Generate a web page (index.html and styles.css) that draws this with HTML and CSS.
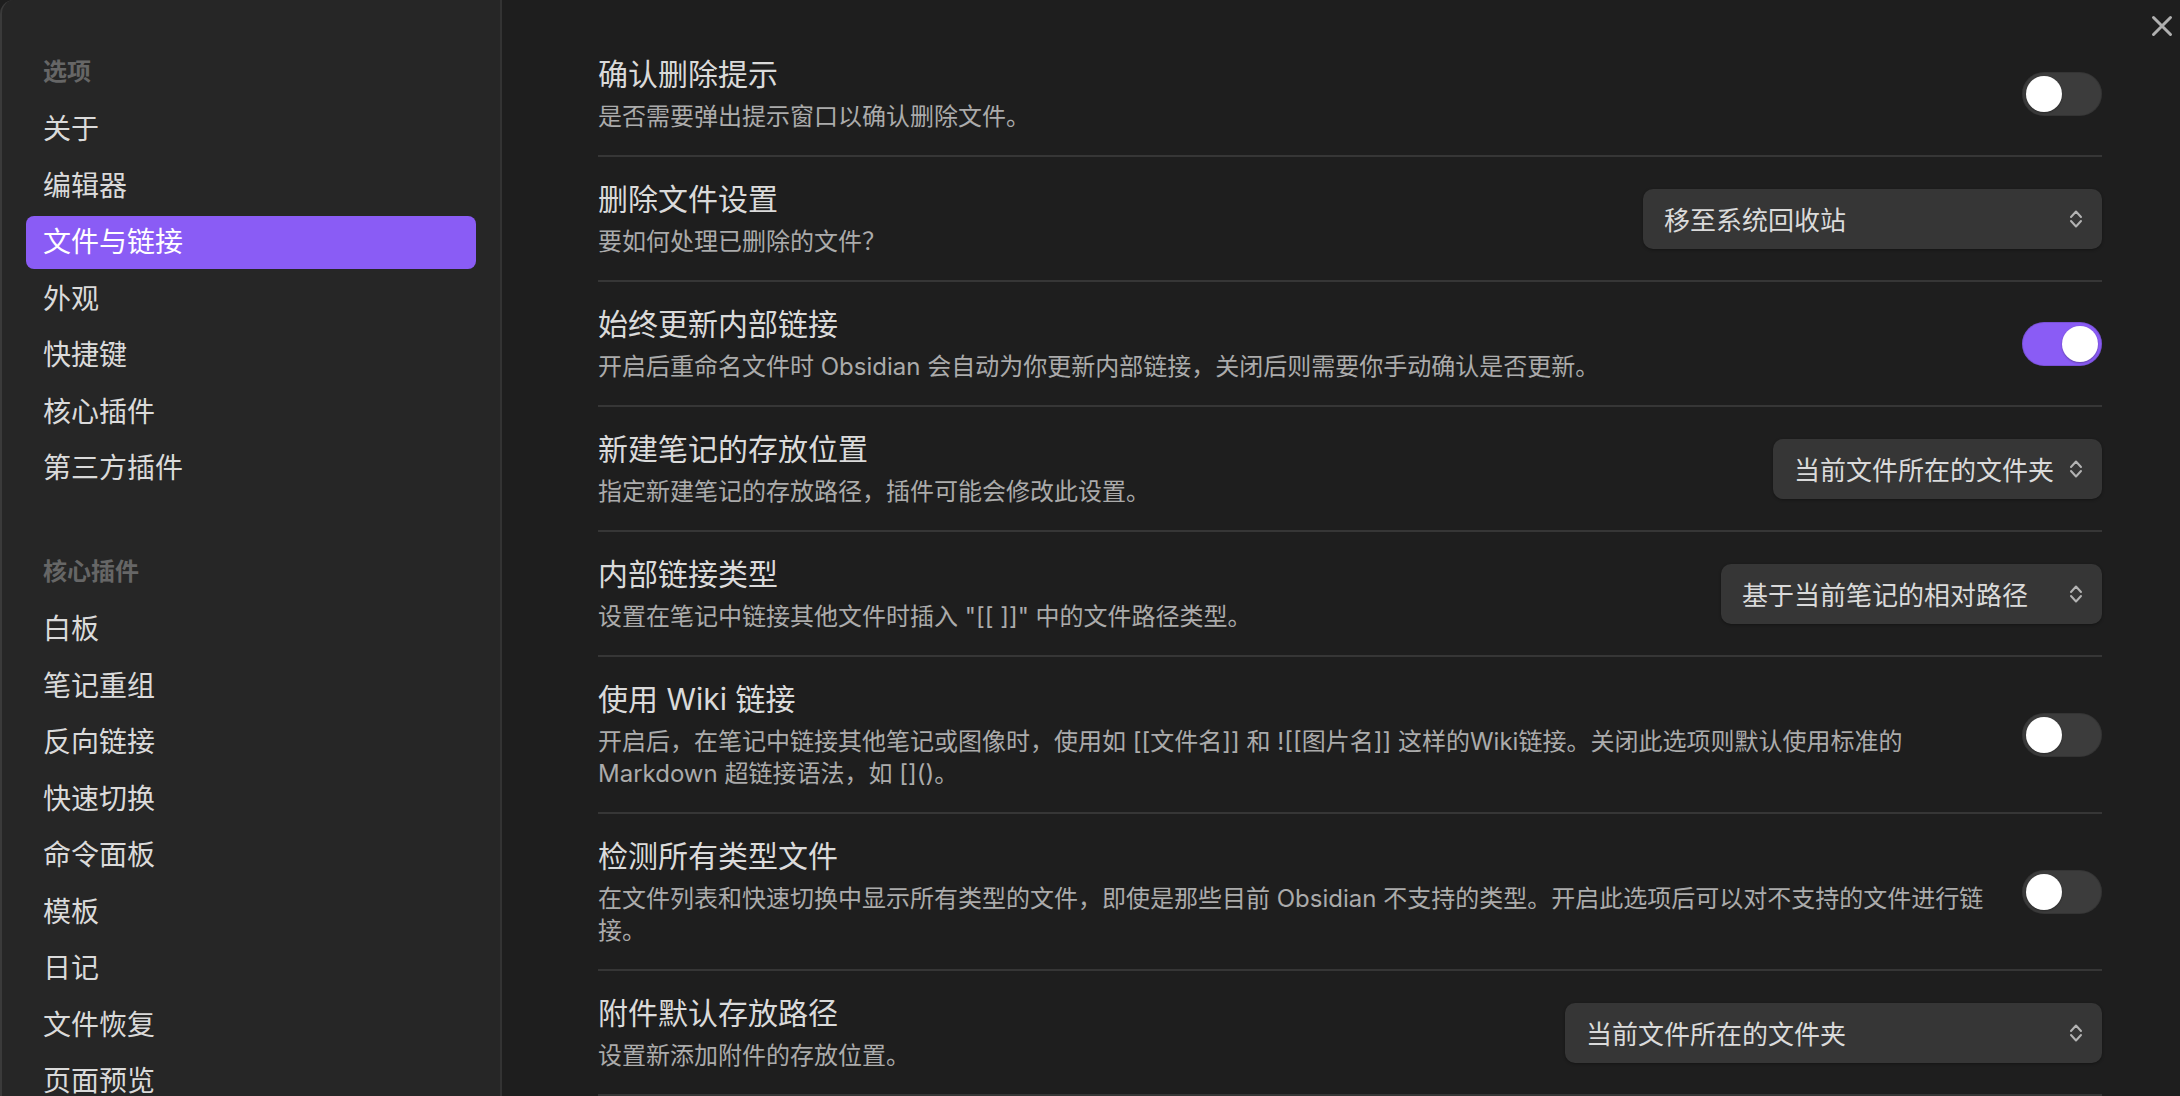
FILE: index.html
```html
<!DOCTYPE html>
<html lang="zh-CN">
<head>
    <meta charset="UTF-8">
    <title>设置 - 文件与链接</title>
    <link rel="stylesheet" href="styles.css">
</head>
<body>
    <div class="modal">
        <nav class="sidebar">
            <div class="nav-group">
                <div class="nav-title">选项</div>
                <div class="nav-item">关于</div>
                <div class="nav-item">编辑器</div>
                <div class="nav-item active">文件与链接</div>
                <div class="nav-item">外观</div>
                <div class="nav-item">快捷键</div>
                <div class="nav-item">核心插件</div>
                <div class="nav-item">第三方插件</div>
            </div>
            <div class="nav-group">
                <div class="nav-title">核心插件</div>
                <div class="nav-item">白板</div>
                <div class="nav-item">笔记重组</div>
                <div class="nav-item">反向链接</div>
                <div class="nav-item">快速切换</div>
                <div class="nav-item">命令面板</div>
                <div class="nav-item">模板</div>
                <div class="nav-item">日记</div>
                <div class="nav-item">文件恢复</div>
                <div class="nav-item">页面预览</div>
            </div>
        </nav>

        <main class="content">
            <div class="setting-item">
                <div class="setting-info">
                    <div class="setting-name">确认删除提示</div>
                    <div class="setting-desc">是否需要弹出提示窗口以确认删除文件。</div>
                </div>
                <div class="setting-control">
                    <div class="toggle"><span class="knob"></span></div>
                </div>
            </div>

            <div class="setting-item">
                <div class="setting-info">
                    <div class="setting-name">删除文件设置</div>
                    <div class="setting-desc">要如何处理已删除的文件？</div>
                </div>
                <div class="setting-control">
                    <div class="dropdown dropdown-trash">
                        <span>移至系统回收站</span>
                        <svg class="chevron" width="14" height="20" viewBox="0 0 14 20"><path d="M2 8 L7 2.5 L12 8 M2 12 L7 17.5 L12 12"/></svg>
                    </div>
                </div>
            </div>

            <div class="setting-item">
                <div class="setting-info">
                    <div class="setting-name">始终更新内部链接</div>
                    <div class="setting-desc">开启后重命名文件时 Obsidian 会自动为你更新内部链接，关闭后则需要你手动确认是否更新。</div>
                </div>
                <div class="setting-control">
                    <div class="toggle on"><span class="knob"></span></div>
                </div>
            </div>

            <div class="setting-item">
                <div class="setting-info">
                    <div class="setting-name">新建笔记的存放位置</div>
                    <div class="setting-desc">指定新建笔记的存放路径，插件可能会修改此设置。</div>
                </div>
                <div class="setting-control">
                    <div class="dropdown dropdown-folder">
                        <span>当前文件所在的文件夹</span>
                        <svg class="chevron" width="14" height="20" viewBox="0 0 14 20"><path d="M2 8 L7 2.5 L12 8 M2 12 L7 17.5 L12 12"/></svg>
                    </div>
                </div>
            </div>

            <div class="setting-item">
                <div class="setting-info">
                    <div class="setting-name">内部链接类型</div>
                    <div class="setting-desc">设置在笔记中链接其他文件时插入 "[[ ]]" 中的文件路径类型。</div>
                </div>
                <div class="setting-control">
                    <div class="dropdown dropdown-link">
                        <span>基于当前笔记的相对路径</span>
                        <svg class="chevron" width="14" height="20" viewBox="0 0 14 20"><path d="M2 8 L7 2.5 L12 8 M2 12 L7 17.5 L12 12"/></svg>
                    </div>
                </div>
            </div>

            <div class="setting-item">
                <div class="setting-info">
                    <div class="setting-name">使用 Wiki 链接</div>
                    <div class="setting-desc">开启后，在笔记中链接其他笔记或图像时，使用如 [[文件名]] 和 ![[图片名]] 这样的Wiki链接。关闭此选项则默认使用标准的 Markdown 超链接语法，如 []()。</div>
                </div>
                <div class="setting-control">
                    <div class="toggle"><span class="knob"></span></div>
                </div>
            </div>

            <div class="setting-item">
                <div class="setting-info">
                    <div class="setting-name">检测所有类型文件</div>
                    <div class="setting-desc">在文件列表和快速切换中显示所有类型的文件，即使是那些目前 Obsidian 不支持的类型。开启此选项后可以对不支持的文件进行链接。</div>
                </div>
                <div class="setting-control">
                    <div class="toggle"><span class="knob"></span></div>
                </div>
            </div>

            <div class="setting-item">
                <div class="setting-info">
                    <div class="setting-name">附件默认存放路径</div>
                    <div class="setting-desc">设置新添加附件的存放位置。</div>
                </div>
                <div class="setting-control">
                    <div class="dropdown dropdown-attach">
                        <span>当前文件所在的文件夹</span>
                        <svg class="chevron" width="14" height="20" viewBox="0 0 14 20"><path d="M2 8 L7 2.5 L12 8 M2 12 L7 17.5 L12 12"/></svg>
                    </div>
                </div>
            </div>

            <div class="setting-item setting-end"></div>
        </main>

        <button class="close" aria-label="关闭">
            <svg width="22" height="22" viewBox="0 0 22 22"><path d="M2.5 2.5 L19.5 19.5 M19.5 2.5 L2.5 19.5"/></svg>
        </button>
    </div>
</body>
</html>
```

FILE: styles.css
```css
/* General Styles */
body {
    margin: 0;
    padding: 0;
    background: #1e1e1e;
    color: #dadada;
    font-family: Inter, "Noto Sans CJK SC", sans-serif;
    overflow: hidden;
}

.modal {
    position: relative;
    display: flex;
    height: 100vh;
    overflow: hidden;
    background: #1e1e1e;
}

/* Sidebar */
.sidebar {
    flex: 0 0 502px;
    box-sizing: border-box;
    padding: 56px 24px 0 24px;
    background: #262626;
    border-left: 2px solid #3a3a3a;
    border-right: 2px solid #333;
    border-top-left-radius: 14px;
}

.nav-group + .nav-group {
    margin-top: 61px;
}

.nav-title {
    padding: 0 17px 15px;
    font-size: 24px;
    line-height: 32px;
    font-weight: 600;
    color: #666;
}

.nav-item {
    padding: 8px 17px;
    margin-bottom: 3.5px;
    font-size: 28px;
    line-height: 37px;
    color: #dadada;
    border-radius: 8px;
}

.nav-item.active {
    background: #8a5cf5;
    color: #fff;
}

/* Content */
.content {
    flex: 1;
    padding: 32px 78px 0 96px;
    min-width: 0;
}

.setting-item {
    display: flex;
    align-items: center;
    padding: 22px 0;
    border-top: 2px solid #363636;
}

.setting-item:first-child {
    border-top: none;
}

.setting-info {
    flex: 1 1 auto;
    margin-right: 24px;
}

.setting-name {
    font-size: 30px;
    line-height: 40px;
    color: #dadada;
}

.setting-desc {
    margin-top: 7px;
    font-size: 24px;
    line-height: 32px;
    color: #ababab;
}

.setting-control {
    flex: 0 0 auto;
    display: flex;
    justify-content: flex-end;
}

/* Toggle */
.toggle {
    position: relative;
    width: 80px;
    height: 44px;
    border-radius: 22px;
    background: #3c3c3c;
    box-shadow: inset 0 0 0 1px rgba(0, 0, 0, 0.12);
}

.toggle .knob {
    position: absolute;
    top: 4px;
    left: 4px;
    width: 36px;
    height: 36px;
    border-radius: 50%;
    background: #fff;
    box-shadow: 0 1px 2px rgba(0, 0, 0, 0.3);
}

.toggle.on {
    background: #8a5cf5;
}

.toggle.on .knob {
    left: 40px;
}

/* Dropdown */
.dropdown {
    display: flex;
    align-items: center;
    justify-content: space-between;
    box-sizing: border-box;
    height: 60px;
    padding: 0 19px 0 21px;
    border-radius: 10px;
    background: #363636;
    box-shadow: 0 1px 3px rgba(0, 0, 0, 0.35);
    font-size: 26px;
    color: #dadada;
}

.dropdown-trash { width: 459px; }
.dropdown-folder { width: 329px; }
.dropdown-link { width: 381px; }
.dropdown-attach { width: 537px; }

.chevron {
    flex-shrink: 0;
}

.chevron path {
    fill: none;
    stroke: #b3b3b3;
    stroke-width: 2;
    stroke-linecap: round;
    stroke-linejoin: round;
}

/* Close button */
.close {
    position: absolute;
    top: 15px;
    right: 7px;
    padding: 0;
    border: none;
    background: none;
    line-height: 0;
    cursor: pointer;
}

.close path {
    stroke: #b0b0b0;
    stroke-width: 3;
    stroke-linecap: round;
}
```
